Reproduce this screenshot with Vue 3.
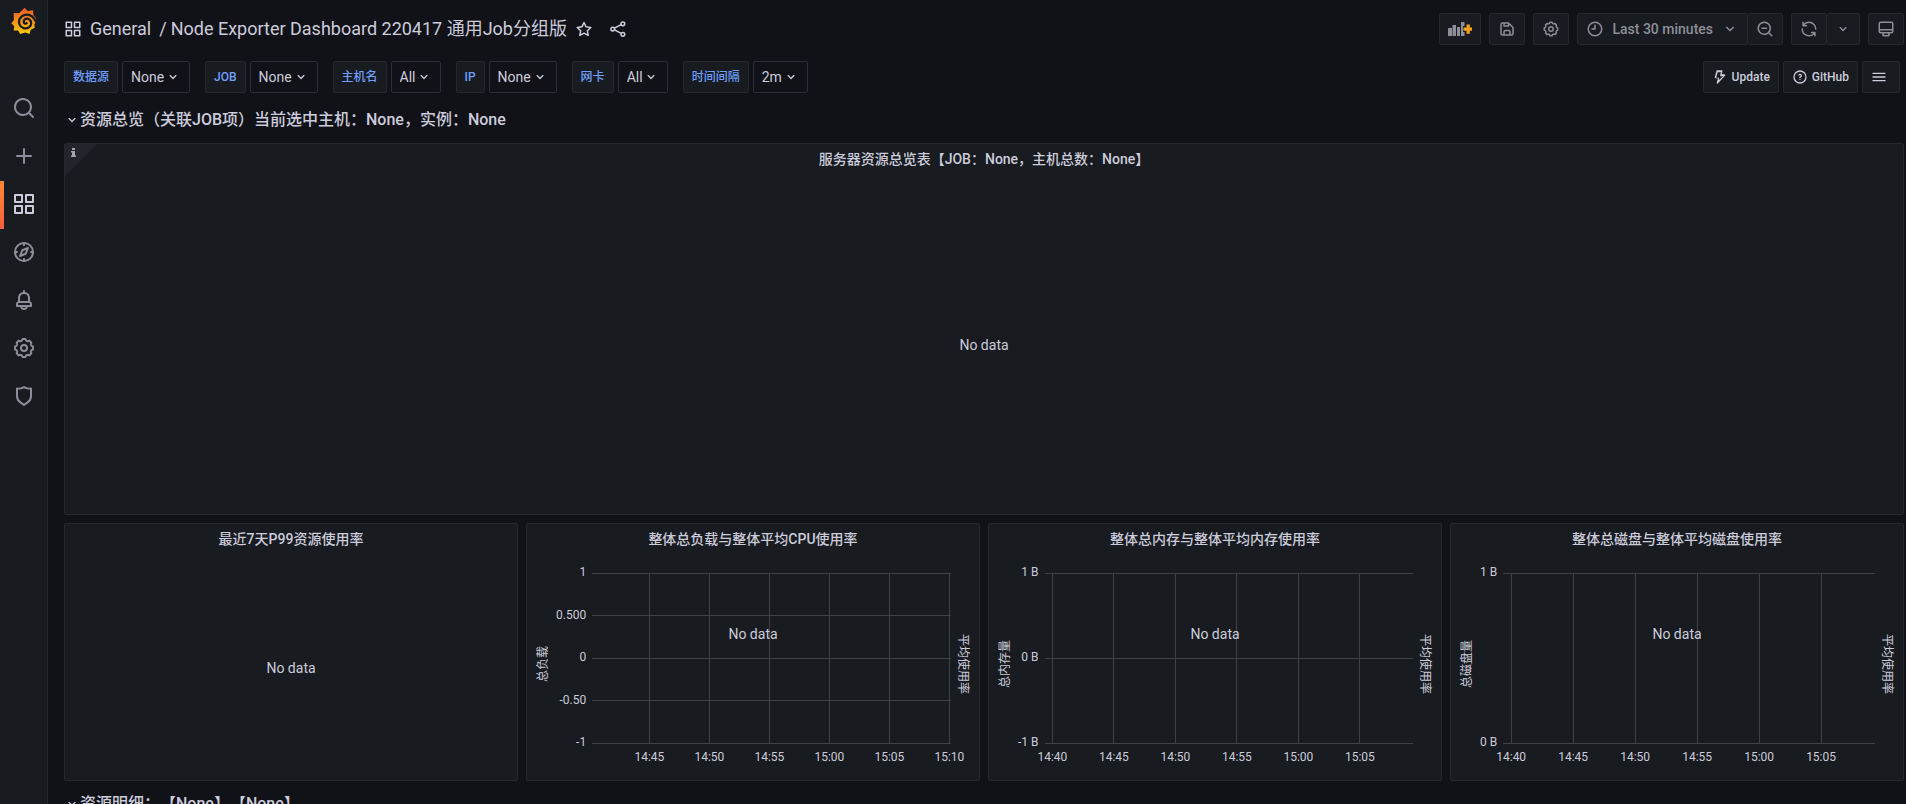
<script setup>
const gear = (() => {
  const point = (radius, degrees) => {
    const a = (degrees * Math.PI) / 180
    return `${(12 + radius * Math.sin(a)).toFixed(2)},${(12 - radius * Math.cos(a)).toFixed(2)}`
  }
  const parts = []
  for (let tooth = 0; tooth < 8; tooth++) {
    const d = tooth * 45
    parts.push(`${tooth ? 'L' : 'M'}${point(9.1, d - 9)}`, `L${point(9.1, d + 9)}`, `Q${point(7.3, d + 15)} ${point(7.6, d + 22.5)}`, `Q${point(7.3, d + 30)} ${point(9.1, d + 36)}`)
  }
  return parts.join('') + 'Z'
})()

const icons = {
  search: 'M21.71,20.29,18,16.61A9,9,0,1,0,16.61,18l3.68,3.68a1,1,0,0,0,1.42,0A1,1,0,0,0,21.71,20.29ZM11,18a7,7,0,1,1,7-7A7,7,0,0,1,11,18Z',
  plus: 'M19,11H13V5a1,1,0,0,0-2,0v6H5a1,1,0,0,0,0,2h6v6a1,1,0,0,0,2,0V13h6a1,1,0,0,0,0-2Z',
  apps: 'M10,13H3a1,1,0,0,0-1,1v7a1,1,0,0,0,1,1h7a1,1,0,0,0,1-1V14A1,1,0,0,0,10,13ZM9,20H4V15H9ZM21,2H14a1,1,0,0,0-1,1v7a1,1,0,0,0,1,1h7a1,1,0,0,0,1-1V3A1,1,0,0,0,21,2ZM20,9H15V4h5Zm1,4H14a1,1,0,0,0-1,1v7a1,1,0,0,0,1,1h7a1,1,0,0,0,1-1V14A1,1,0,0,0,21,13Zm-1,7H15V15h5ZM10,2H3A1,1,0,0,0,2,3v7a1,1,0,0,0,1,1h7a1,1,0,0,0,1-1V3A1,1,0,0,0,10,2ZM9,9H4V4H9Z',
  bell: 'M18,13.18V10a6,6,0,0,0-5-5.91V3a1,1,0,0,0-2,0V4.09A6,6,0,0,0,6,10v3.18A3,3,0,0,0,4,16v2a1,1,0,0,0,1,1H8.14a4,4,0,0,0,7.72,0H19a1,1,0,0,0,1-1V16A3,3,0,0,0,18,13.18ZM8,10a4,4,0,0,1,8,0v3H8Zm4,10a2,2,0,0,1-1.72-1h3.44A2,2,0,0,1,12,20Zm6-3H6V16a1,1,0,0,1,1-1H17a1,1,0,0,1,1,1Z',
  shield: 'M19.63,3.65a1,1,0,0,0-.84-.2,8,8,0,0,1-6.22-1.27,1,1,0,0,0-1.14,0A8,8,0,0,1,5.21,3.45a1,1,0,0,0-.84.2A1,1,0,0,0,4,4.43v7.45a9,9,0,0,0,3.77,7.33l3.65,2.6a1,1,0,0,0,1.16,0l3.65-2.6A9,9,0,0,0,20,11.88V4.43A1,1,0,0,0,19.63,3.65ZM18,11.88a7,7,0,0,1-2.93,5.7L12,19.77,8.93,17.58A7,7,0,0,1,6,11.88V5.58a10,10,0,0,0,6-1.39,10,10,0,0,0,6,1.39Z',
  star: 'M22,9.67A1,1,0,0,0,21.14,9l-5.69-.83L12.9,3a1,1,0,0,0-1.8,0L8.55,8.16,2.86,9a1,1,0,0,0-.81.68,1,1,0,0,0,.25,1l4.13,4-1,5.68A1,1,0,0,0,6.9,21.44L12,18.77l5.1,2.67a.93.93,0,0,0,.46.12,1,1,0,0,0,.59-.19,1,1,0,0,0,.4-1l-1-5.68,4.13-4A1,1,0,0,0,22,9.67Zm-6.15,4a1,1,0,0,0-.29.88l.72,4.2-3.76-2a1.06,1.06,0,0,0-.94,0l-3.76,2,.72-4.2a1,1,0,0,0-.29-.88l-3-3,4.21-.61a1,1,0,0,0,.76-.55L12,5.7l1.88,3.82a1,1,0,0,0,.76.55l4.21.61Z',
  save: 'M20.71,9.29l-6-6a1,1,0,0,0-.32-.21A1.09,1.09,0,0,0,14,3H6A3,3,0,0,0,3,6V18a3,3,0,0,0,3,3H18a3,3,0,0,0,3-3V10A1,1,0,0,0,20.71,9.29ZM9,5h4V7H9Zm6,14H9V16a1,1,0,0,1,1-1h4a1,1,0,0,1,1,1Zm4-1a1,1,0,0,1-1,1H17V16a3,3,0,0,0-3-3H10a3,3,0,0,0-3,3v3H6a1,1,0,0,1-1-1V6A1,1,0,0,1,6,5H7V8A1,1,0,0,0,8,9h6a1,1,0,0,0,1-1V6.41l4,4Z',
  sync: 'M19.91,15.51H15.38a1,1,0,0,0,0,2h2.4A8,8,0,0,1,4,12a1,1,0,1,0-2,0,10,10,0,0,0,16.88,7.23V21a1,1,0,0,0,2,0V16.5A1,1,0,0,0,19.91,15.51ZM12,2A10,10,0,0,0,5.12,4.77V3a1,1,0,0,0-2,0V7.5a1,1,0,0,0,1,1h4.5a1,1,0,0,0,0-2H6.22A8,8,0,0,1,20,12a1,1,0,0,0,2,0A10,10,0,0,0,12,2Z',
  clock: 'M12,2A10,10,0,1,0,22,12,10,10,0,0,0,12,2Zm0,18a8,8,0,1,1,8-8A8,8,0,0,1,12,20ZM12,6a1,1,0,0,0-1,1v4H8a1,1,0,0,0,0,2h4a1,1,0,0,0,1-1V7A1,1,0,0,0,12,6Z',
  zoomOut: 'M21.71,20.29,18,16.61A9,9,0,1,0,16.61,18l3.68,3.68a1,1,0,0,0,1.42,0A1,1,0,0,0,21.71,20.29ZM11,18a7,7,0,1,1,7-7A7,7,0,0,1,11,18ZM14,10H8a1,1,0,0,0,0,2h6a1,1,0,0,0,0-2Z',
  monitor: 'M19,2H5A3,3,0,0,0,2,5V15a3,3,0,0,0,3,3H7.64l-.58,1a2,2,0,0,0,0,2,2,2,0,0,0,1.75,1h6.46A2,2,0,0,0,17,21a2,2,0,0,0,0-2l-.59-1H19a3,3,0,0,0,3-3V5A3,3,0,0,0,19,2ZM8.77,20,10,18H14l1.2,2ZM20,15a1,1,0,0,1-1,1H5a1,1,0,0,1-1-1V14H20Zm0-3H4V5A1,1,0,0,1,5,4H19a1,1,0,0,1,1,1Z',
  bolt: 'M19.87,8.6A1,1,0,0,0,19,8H14.42l1.27-4.74a1,1,0,0,0-.17-.87A1,1,0,0,0,14.72,2h-7a1,1,0,0,0-1,.74L4.07,12.74a1,1,0,0,0,.17.87,1,1,0,0,0,.8.39H8.89L7.08,20.74a1,1,0,0,0,1.71.93L19.7,9.61A1,1,0,0,0,19.87,8.6ZM10,17l.73-2.74a1,1,0,0,0-.17-.87,1,1,0,0,0-.8-.39H6.35L8.49,5h4.93L12.15,9.74a1,1,0,0,0,1,1.26h3.57Z',
  question: 'M11.29,15.29a1.58,1.58,0,0,0-.12.15.76.76,0,0,0-.09.18.64.64,0,0,0-.06.18,1.36,1.36,0,0,0,0,.2.84.84,0,0,0,.08.38.9.9,0,0,0,.54.54.94.94,0,0,0,.76,0,.9.9,0,0,0,.54-.54A1,1,0,0,0,13,16a1,1,0,0,0-.29-.71A1,1,0,0,0,11.29,15.29ZM12,2A10,10,0,1,0,22,12,10,10,0,0,0,12,2Zm0,18a8,8,0,1,1,8-8A8,8,0,0,1,12,20ZM12,7A3,3,0,0,0,9.4,8.5a1,1,0,1,0,1.73,1A1,1,0,0,1,12,9a1,1,0,0,1,0,2,1,1,0,0,0-1,1v1a1,1,0,0,0,2,0v-.18A3,3,0,0,0,12,7Z',
  down: 'M17,9.17a1,1,0,0,0-1.41,0L12,12.71,8.46,9.17a1,1,0,0,0-1.41,0,1,1,0,0,0,0,1.42l4.24,4.24a1,1,0,0,0,1.42,0L17,10.59A1,1,0,0,0,17,9.17Z',
}

const navTop = [
  { name: 'Search', icon: 'search' },
  { name: 'Create', icon: 'plus' },
  { name: 'Dashboards', icon: 'apps', active: true },
  { name: 'Explore', icon: 'compass' },
  { name: 'Alerting', icon: 'bell' },
  { name: 'Configuration', icon: 'gear' },
  { name: 'Server Admin', icon: 'shield' },
]

const variables = [
  { id: 'datasource', label: '数据源', value: 'None' },
  { id: 'job', label: 'JOB', value: 'None' },
  { id: 'hostname', label: '主机名', value: 'All' },
  { id: 'node', label: 'IP', value: 'None' },
  { id: 'device', label: '网卡', value: 'All' },
  { id: 'interval', label: '时间间隔', value: '2m' },
]

/* Tick positions are percentages of the plot's width. */
const ticks = (labels, first, step) => labels.map((text, i) => ({ text, at: first + step * i }))

const charts = [
  {
    title: '整体总负载与整体平均CPU使用率',
    left: '总负载',
    right: '平均使用率',
    y: ['1', '0.500', '0', '-0.50', '-1'],
    x: ticks(['14:45', '14:50', '14:55', '15:00', '15:05', '15:10'], 16, 16.72),
  },
  {
    title: '整体总内存与整体平均内存使用率',
    left: '总内存量',
    right: '平均使用率',
    y: ['1 B', '0 B', '-1 B'],
    x: ticks(['14:40', '14:45', '14:50', '14:55', '15:00', '15:05'], 2, 16.69),
  },
  {
    title: '整体总磁盘与整体平均磁盘使用率',
    left: '总磁盘量',
    right: '平均使用率',
    y: ['1 B', '0 B'],
    x: ticks(['14:40', '14:45', '14:50', '14:55', '15:00', '15:05'], 2.2, 16.67),
  },
]
</script>

<template>
  <div class="shell">
    <nav class="sidebar" aria-label="Main">
      <a class="logo" href="#" aria-label="Home">
        <svg viewBox="0 0 80 84" width="26" height="28" aria-hidden="true">
          <defs>
            <linearGradient id="flame" x1="0" y1="0" x2="0" y2="1">
              <stop offset="0" stop-color="#f05a28" />
              <stop offset="1" stop-color="#fbca0a" />
            </linearGradient>
          </defs>
          <path fill="url(#flame)" d="M42 1 L51 11 L68 9 L69 24 Q78 32 78 41 L72 52 L73 63 L61 69 L57 82 L44 77 L28 82 L22 71 L8 71 L10 58 L1 49 L9 39 L8 17 L25 18 Z" />
          <path class="swirl" d="M76 43 C68 27 55 20 43 23 C28 27 22 40 26 52 C30 64 45 69 56 61 C66 53 63 38 52 35 C43 33 37 41 40 47 C42 51 46 51 48 49" />
        </svg>
      </a>
      <a v-for="item in navTop" :key="item.name" href="#" class="nav-item" :class="{ active: item.active }" :aria-label="item.name">
        <svg class="icon24" viewBox="0 0 24 24" aria-hidden="true">
          <g v-if="item.icon === 'compass'" class="line">
            <circle cx="12" cy="12" r="9" />
            <path d="M12 3v2M12 19v2M3 12h2M19 12h2M16 8l-2.3 5.7L8 16l2.3-5.7Z" />
          </g>
          <g v-else-if="item.icon === 'gear'" class="line">
            <path :d="gear" />
            <circle cx="12" cy="12" r="3" />
          </g>
          <path v-else :d="icons[item.icon]" />
        </svg>
      </a>
    </nav>

    <main class="page">
      <header class="topbar">
        <svg class="icon18" viewBox="0 0 24 24" aria-hidden="true"><path :d="icons.apps" /></svg>
        <h1 class="crumbs">
          <a href="#">General</a><span class="slash">/</span><a href="#">Node Exporter Dashboard 220417 通用Job分组版</a>
        </h1>
        <button class="bare" type="button" aria-label="Mark as favorite">
          <svg class="icon18" viewBox="0 0 24 24" aria-hidden="true"><path :d="icons.star" /></svg>
        </button>
        <button class="bare" type="button" aria-label="Share dashboard">
          <svg class="icon18" viewBox="0 0 24 24" aria-hidden="true">
            <g class="line">
              <circle cx="5" cy="12" r="2.5" /><circle cx="18.5" cy="5" r="2.5" /><circle cx="18.5" cy="19" r="2.5" />
              <path d="M7.3 10.9 16.2 6.2M7.3 13.1l8.9 4.7" />
            </g>
          </svg>
        </button>

        <div class="toolbar">
          <button class="tool" type="button" aria-label="Add panel">
            <svg viewBox="0 0 24 14" width="24" height="14" aria-hidden="true">
              <path d="M0 6h4v8H0ZM4.500 3h3.500v11H4.500ZM9 5h3v9H9ZM13 0h3.500v4H15v6h1.500v4H13Z" />
              <path fill="#f9a11b" d="M18.500 2.500h3.300v3H24.500v3.200h-2.700v3h-3.300v-3H15.500V5.500h3Z" />
            </svg>
          </button>
          <button class="tool" type="button" aria-label="Save dashboard">
            <svg class="icon18" viewBox="0 0 24 24" aria-hidden="true"><path :d="icons.save" /></svg>
          </button>
          <button class="tool" type="button" aria-label="Dashboard settings">
            <svg class="icon18" viewBox="0 0 24 24" aria-hidden="true">
              <g class="line"><path :d="gear" /><circle cx="12" cy="12" r="3" /></g>
            </svg>
          </button>
          <div class="group">
            <button class="tool" type="button">
              <svg class="icon18" viewBox="0 0 24 24" aria-hidden="true"><path :d="icons.clock" /></svg>
              <span>Last 30 minutes</span>
              <svg class="icon18" viewBox="0 0 24 24" aria-hidden="true"><path :d="icons.down" /></svg>
            </button>
            <button class="tool" type="button" aria-label="Zoom out time range">
              <svg class="icon18" viewBox="0 0 24 24" aria-hidden="true"><path :d="icons.zoomOut" /></svg>
            </button>
          </div>
          <div class="group">
            <button class="tool" type="button" aria-label="Refresh dashboard">
              <svg class="icon18" viewBox="0 0 24 24" aria-hidden="true"><path :d="icons.sync" /></svg>
            </button>
            <button class="tool" type="button" aria-label="Refresh interval">
              <svg class="icon16" viewBox="0 0 24 24" aria-hidden="true"><path :d="icons.down" /></svg>
            </button>
          </div>
          <button class="tool" type="button" aria-label="Cycle view mode">
            <svg class="icon18" viewBox="0 0 24 24" aria-hidden="true"><path :d="icons.monitor" /></svg>
          </button>
        </div>
      </header>

      <section class="submenu" aria-label="Dashboard variables">
        <div v-for="item in variables" :key="item.id" class="variable">
          <label :for="item.id">{{ item.label }}</label>
          <span class="picker">
            <select :id="item.id"><option>{{ item.value }}</option></select>
            <svg class="icon16" viewBox="0 0 24 24" aria-hidden="true"><path :d="icons.down" /></svg>
          </span>
        </div>
        <div class="links">
          <a class="link" href="#"><svg class="icon16" viewBox="0 0 24 24" aria-hidden="true"><path :d="icons.bolt" /></svg><span>Update</span></a>
          <a class="link" href="#"><svg class="icon16" viewBox="0 0 24 24" aria-hidden="true"><path :d="icons.question" /></svg><span>GitHub</span></a>
          <button class="link" type="button" aria-label="More dashboards">
            <svg class="icon16" viewBox="0 0 24 24" aria-hidden="true"><path class="line" d="M3 6.500h18M3 12h18M3 17.500h18" /></svg><span></span>
          </button>
        </div>
      </section>

      <div class="rows">
        <button class="row-title" type="button">
          <svg class="icon16" viewBox="0 0 24 24" aria-hidden="true"><path :d="icons.down" /></svg>资源总览（关联JOB项）当前选中主机：None，实例：None
        </button>

        <section class="panel overview">
          <span class="corner">
            <svg viewBox="0 0 5 9" width="5" height="9" aria-hidden="true"><path d="M1 0h3v2H1ZM0 3h4v4.500h1V9H0V7.500h1v-3H0Z" /></svg>
          </span>
          <h2>服务器资源总览表【JOB：None，主机总数：None】</h2>
          <p class="empty">No data</p>
        </section>

        <div class="grid">
          <section class="panel">
            <h2>最近7天P99资源使用率</h2>
            <p class="empty">No data</p>
          </section>
          <section v-for="chart in charts" :key="chart.title" class="panel">
            <h2>{{ chart.title }}</h2>
            <div class="chart">
              <span class="axis-title left">{{ chart.left }}</span>
              <div class="y-labels"><span v-for="label in chart.y" :key="label">{{ label }}</span></div>
              <svg class="plot" aria-hidden="true">
                <line v-for="(label, i) in chart.y" :key="label" x1="0" x2="100%" :y1="(i * 100) / (chart.y.length - 1) + '%'" :y2="(i * 100) / (chart.y.length - 1) + '%'" />
                <g v-for="tick in chart.x" :key="tick.text">
                  <line :x1="tick.at + '%'" :x2="tick.at + '%'" y1="0" y2="100%" />
                  <text :x="tick.at + '%'" y="100%" dy="18" text-anchor="middle">{{ tick.text }}</text>
                </g>
              </svg>
              <span class="axis-title right">{{ chart.right }}</span>
              <p class="over">No data</p>
            </div>
          </section>
        </div>

        <button class="row-title" type="button">
          <svg class="icon16" viewBox="0 0 24 24" aria-hidden="true"><path :d="icons.down" /></svg>资源明细：【None】【None】
        </button>
      </div>
    </main>
  </div>
</template>

<style>
body {
  margin: 0;
  background: #111217;
}
</style>

<style scoped>
.shell {
  --text: #ccccdc;
  --muted: #8e8e9a;
  --surface: #181b1f;
  --edge: #25272c;
  display: flex;
  height: 100vh;
  overflow: hidden;
  color: var(--text);
  font: 14px/22px Roboto, "Noto Sans CJK SC", sans-serif;
}
.shell *,
.shell *::before {
  box-sizing: border-box;
}
a {
  color: inherit;
  text-decoration: none;
}
button,
select {
  margin: 0;
  color: inherit;
  font: inherit;
  cursor: pointer;
}
svg {
  flex: none;
  display: block;
  fill: currentColor;
}
.line {
  fill: none;
  stroke: currentColor;
  stroke-width: 2;
  stroke-linecap: round;
  stroke-linejoin: round;
}
.icon16 { width: 16px; height: 16px; }
.icon18 { width: 18px; height: 18px; }
.icon24 { width: 24px; height: 24px; }

.sidebar {
  flex: none;
  width: 48px;
  background: var(--surface);
  border-right: 1px solid var(--edge);
  color: var(--muted);
}
.logo {
  display: flex;
  justify-content: center;
  height: 84px;
  padding-top: 7px;
}
.swirl {
  fill: none;
  stroke: var(--surface);
  stroke-width: 7;
  stroke-linecap: round;
}
.nav-item {
  position: relative;
  display: flex;
  align-items: center;
  justify-content: center;
  height: 48px;
}
.nav-item.active {
  color: var(--text);
}
.nav-item.active::before {
  content: "";
  position: absolute;
  left: 0;
  top: 1px;
  width: 4px;
  height: 48px;
  background: linear-gradient(#ff8833, #f55f3e);
}

.page {
  flex: 1;
  min-width: 0;
  padding: 13px 2px 0 16px;
  overflow-y: auto;
  scrollbar-width: none;
}
.topbar,
.toolbar,
.submenu,
.links,
.variable,
.picker,
.group {
  display: flex;
  align-items: center;
}
.crumbs {
  margin: 0 8px;
  font-size: 18px;
  line-height: 32px;
  font-weight: 400;
  white-space: nowrap;
}
.slash {
  margin: 0 4px 0 8px;
}
.bare {
  display: flex;
  margin-right: 16px;
  padding: 0;
  background: none;
  border: 0;
}
.toolbar {
  gap: 8px;
  margin-left: auto;
  color: var(--muted);
}
.tool {
  display: flex;
  align-items: center;
  gap: 8px;
  height: 32px;
  padding: 0 8px;
  background: var(--surface);
  border: 1px solid var(--edge);
  border-radius: 2px;
  font-weight: 500;
  white-space: nowrap;
}
.group .tool + .tool {
  border-left: 0;
}

.submenu {
  gap: 15px;
  margin-top: 16px;
}
.variable {
  gap: 4px;
}
.variable label,
.link {
  display: flex;
  align-items: center;
  height: 32px;
  padding: 0 8px;
  background: var(--surface);
  border: 1px solid var(--edge);
  border-radius: 2px;
  font-size: 12px;
  font-weight: 500;
  white-space: nowrap;
}
.variable label {
  color: #6e9fff;
}
.picker {
  height: 32px;
  padding: 0 8px;
  border: 1px solid #2d2e35;
  border-radius: 2px;
}
.picker select {
  appearance: none;
  padding: 0;
  background: none;
  border: 0;
}
.picker option {
  background: var(--surface);
}
.links {
  gap: 4px;
  margin: 0 4px 0 auto;
}
.link {
  gap: 4px;
}

.rows {
  display: flex;
  flex-direction: column;
  gap: 8px;
  margin-top: 12px;
}
.row-title {
  display: flex;
  align-items: center;
  height: 30px;
  padding: 0;
  background: none;
  border: 0;
  font-size: 16px;
  font-weight: 500;
  text-spacing-trim: space-all;
  white-space: nowrap;
}
.panel {
  position: relative;
  display: flex;
  flex-direction: column;
  min-width: 0;
  min-height: 258px;
  background: var(--surface);
  border: 1px solid var(--edge);
  border-radius: 2px;
}
.overview {
  min-height: 372px;
}
.panel h2 {
  height: 32px;
  margin: 0;
  font-size: 14px;
  line-height: 30px;
  font-weight: 500;
  text-align: center;
  text-spacing-trim: space-all;
}
.empty {
  display: flex;
  flex: 1;
  align-items: center;
  justify-content: center;
  margin: 0;
}
.corner {
  position: absolute;
  left: 0;
  top: 0;
  width: 32px;
  height: 32px;
  padding: 4px 6px;
  background: #22252b;
  clip-path: polygon(0 0, 100% 0, 0 100%);
  color: #a5a5b2;
}
.grid {
  display: grid;
  grid-template-columns: repeat(4, minmax(0, 1fr));
  gap: 8px;
}

.chart {
  position: relative;
  display: flex;
  flex: 1;
  padding: 17px 8px 37px;
  font-size: 12px;
  line-height: 16px;
}
.axis-title {
  flex: none;
  align-self: center;
  width: 16px;
  margin-top: 12px;
  writing-mode: vertical-rl;
  text-orientation: sideways;
  white-space: nowrap;
}
.axis-title.left {
  transform: rotate(180deg);
  margin-right: 5px;
}
.axis-title.right {
  margin-left: 4px;
}
.y-labels {
  display: flex;
  flex-direction: column;
  justify-content: space-between;
  margin: -9px 6px -7px 0;
  text-align: right;
}
.plot {
  flex: 1;
  width: 0;
  min-width: 0;
  overflow: visible;
}
.plot line {
  stroke: #3f4144;
  shape-rendering: crispEdges;
}
.plot text {
  fill: var(--text);
}
.over {
  position: absolute;
  left: 0;
  right: 0;
  top: 30%;
  margin: 0;
  font-size: 14px;
  line-height: 22px;
  text-align: center;
}
</style>
